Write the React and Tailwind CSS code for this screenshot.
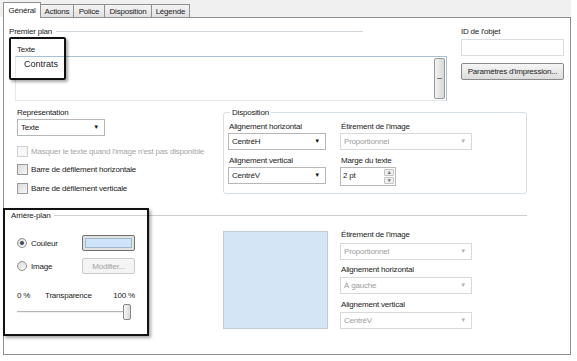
import React from 'react'

const font = { fontFamily: '"Liberation Sans", Arial, sans-serif' }

function Select({ value, width, disabled }) {
  return (
    <div
      className={`flex h-[17px] items-center justify-between border bg-white pl-[3px] pr-[5px] ${
        disabled ? 'border-[#d9d9d9] text-[#9d9d9d]' : 'border-[#b7b7b7] text-[#222]'
      }`}
      style={{ width }}
    >
      <span>{value}</span>
      <span className={`text-[6px] ${disabled ? 'text-[#b0b0b0]' : 'text-[#111]'}`}>▼</span>
    </div>
  )
}

function Checkbox({ label, disabled }) {
  return (
    <div className={`flex h-[11px] items-center gap-[3px] whitespace-nowrap ${disabled ? 'text-[#a5a5a5]' : 'text-[#222]'}`}>
      <div
        className={`h-[11px] w-[11px] shrink-0 border ${
          disabled
            ? 'border-[#d0d0d0] bg-[#f7f7f7]'
            : 'border-[#9a9a9a] bg-gradient-to-br from-[#dcdcdc] to-[#f6f6f6]'
        }`}
      />
      <span>{label}</span>
    </div>
  )
}

function Radio({ checked }) {
  return (
    <div className="flex h-[10px] w-[10px] items-center justify-center rounded-full border border-[#929292] bg-gradient-to-br from-[#d8d8d8] to-[#f8f8f8]">
      {checked && <div className="h-[4px] w-[4px] rounded-full bg-[#3b4a5a]" />}
    </div>
  )
}

function Tab({ label, width, active }) {
  return active ? (
    <div
      className="relative z-10 -mb-px flex h-[16px] items-start justify-center border border-b-0 border-[#8e8f8f] bg-white pt-[2px] text-[#222]"
      style={{ width }}
    >
      {label}
    </div>
  ) : (
    <div
      className="-ml-px flex h-[13px] items-center justify-center border border-b-0 border-[#8e8f8f] bg-gradient-to-b from-[#f4f4f4] to-[#e1e1e1] text-[#222]"
      style={{ width }}
    >
      {label}
    </div>
  )
}

export default function App() {
  return (
    <div
      className="relative h-[361px] w-[577px] overflow-hidden whitespace-nowrap bg-white text-[8px] leading-[11px] tracking-[-0.2px]"
      style={font}
    >
      {/* tabs */}
      <div className="flex h-[17px] w-[571px] items-end bg-[#f0f0f0] pl-[3px]">
        <Tab label="Général" width={38} active />
        <Tab label="Actions" width={34} />
        <Tab label="Police" width={32} />
        <Tab label="Disposition" width={48} />
        <Tab label="Légende" width={39} />
      </div>

      {/* panel */}
      <div className="ml-[3px] h-[338px] w-[568px] border border-[#8e8f8f] bg-white text-[#222]">
        {/* premier plan */}
        <div className="flex h-[83px]">
          <div className="ml-[5px] w-[438px]">
            <div className="mt-[8px] flex h-[11px] items-center">
              <span>Premier plan</span>
              <div className="ml-[4px] mr-[84px] h-px flex-1 bg-[#d0d7dd]" />
            </div>
            <div className="ml-[8px] mt-[7px] h-[11px]">Texte</div>
            <div className="ml-[6px] mt-[1px] flex h-[45px] w-[432px] justify-between border border-[#a9bfd6] border-b-[#e3e9ef] border-l-[#e3e9ef] bg-white">
              <span className="ml-[8px] mt-[2px] text-[9px] tracking-normal">Contrats</span>
              <div className="mr-[1px] mt-[1px] flex h-[41px] w-[11px] items-center justify-center rounded-[2px] border border-[#9a9a9a] bg-gradient-to-r from-[#f2f2f2] to-[#d9d9d9]">
                <div className="h-px w-[5px] bg-[#777]" />
              </div>
            </div>
          </div>
          <div className="ml-[14px] w-[103px]">
            <div className="mt-[8px] h-[11px]">ID de l'objet</div>
            <div className="mt-[2px] h-[17px] border border-[#d9dde2] bg-white" />
            <div className="mt-[7px] flex h-[17px] items-center justify-center rounded-[2px] border border-[#8a8a8a] bg-gradient-to-b from-[#f6f6f6] to-[#dcdcdc]">
              Paramètres d'impression...
            </div>
          </div>
        </div>

        {/* représentation + disposition */}
        <div className="flex h-[104px]">
          <div className="ml-[13px] w-[206px]">
            <div className="mt-[6px] h-[11px]">Représentation</div>
            <div className="mt-[1px]">
              <Select value="Texte" width={88} />
            </div>
            <div className="mt-[10px]">
              <Checkbox label="Masquer le texte quand l'image n'est pas disponible" disabled />
            </div>
            <div className="mt-[7px]">
              <Checkbox label="Barre de défilement horizontale" />
            </div>
            <div className="mt-[8px]">
              <Checkbox label="Barre de défilement verticale" />
            </div>
          </div>
          <fieldset className="mt-[6px] h-[87px] w-[304px] rounded-[3px] border border-[#d5dfe5] px-[4px]">
            <legend className="ml-[2px] px-[2px] leading-[11px]">Disposition</legend>
            <div className="mt-[3px] grid grid-cols-[98px_132px] gap-x-[14px]">
              <div>
                <div className="ml-[1px] h-[11px]">Alignement horizontal</div>
                <div className="mt-[1px]">
                  <Select value="CentréH" width={98} />
                </div>
                <div className="ml-[1px] mt-[5px] h-[11px]">Alignement vertical</div>
                <div className="mt-[1px]">
                  <Select value="CentréV" width={98} />
                </div>
              </div>
              <div>
                <div className="ml-[1px] h-[11px]">Étirement de l'image</div>
                <div className="mt-[1px]">
                  <Select value="Proportionnel" width={132} disabled />
                </div>
                <div className="ml-[1px] mt-[5px] h-[11px]">Marge du texte</div>
                <div className="mt-[1px] flex h-[19px] w-[56px] justify-between border border-[#b7b7b7] bg-white pl-[2px]">
                  <span className="mt-[2px]">2 pt</span>
                  <div className="mr-[1px] mt-[1px] flex flex-col gap-px">
                    <div className="flex h-[7px] w-[10px] items-center justify-center rounded-[1px] border border-[#c4c4c4] bg-[#eeeeee] text-[5px] leading-none text-[#666]">▲</div>
                    <div className="flex h-[7px] w-[10px] items-center justify-center rounded-[1px] border border-[#c4c4c4] bg-[#eeeeee] text-[5px] leading-none text-[#666]">▼</div>
                  </div>
                </div>
              </div>
            </div>
          </fieldset>
        </div>

        {/* arrière-plan */}
        <div className="ml-[7px] mt-[5px] flex h-[11px] w-[516px] items-center">
          <span>Arrière-plan</span>
          <div className="ml-[4px] h-px flex-1 bg-[#cfcfcf]" />
        </div>

        <div className="flex">
          <div className="ml-[13px] w-[206px]">
            <div className="mt-[14px] flex h-[16px] items-center">
              <div className="flex w-[65px] items-center gap-[4px]">
                <Radio checked />
                <span>Couleur</span>
              </div>
              <div className="flex h-[16px] w-[53px] items-center justify-center rounded-[2px] border border-[#707070] bg-[#e2e2e2]">
                <div className="h-[10px] w-[47px] border border-[#9fb7cf] bg-[#cfe4f8]" />
              </div>
            </div>
            <div className="mt-[7px] flex h-[16px] items-center">
              <div className="flex w-[65px] items-center gap-[4px]">
                <Radio />
                <span>Image</span>
              </div>
              <div className="flex h-[16px] w-[53px] items-center justify-center rounded-[2px] border border-[#cbcbcb] bg-[#f4f4f4] text-[#a3a3a3]">
                Modifier...
              </div>
            </div>
            <div className="mt-[16px] flex h-[11px] w-[118px] items-center">
              <span className="w-[28px]">0 %</span>
              <span className="flex-1">Transparence</span>
              <span>100 %</span>
            </div>
            <div className="mt-[3px] flex h-[16px] w-[114px] items-center">
              <div className="h-[2px] flex-1 border-t border-b border-t-[#b5b5b5] border-b-[#f0f0f0]" />
              <div className="h-[16px] w-[8px] rounded-[2px] border border-[#8a8a8a] bg-gradient-to-r from-[#f6f6f6] to-[#dadada]" />
            </div>
          </div>
          <div className="mt-[10px] h-[98px] w-[105px] border border-[#c3ccd5] bg-[#d4e5f6]" />
          <div className="ml-[12px]">
            <div className="ml-[1px] mt-[8px] h-[11px]">Étirement de l'image</div>
            <div className="mt-[3px]">
              <Select value="Proportionnel" width={132} disabled />
            </div>
            <div className="ml-[1px] mt-[4px] h-[11px]">Alignement horizontal</div>
            <div className="mt-[2px]">
              <Select value="À gauche" width={132} disabled />
            </div>
            <div className="ml-[1px] mt-[5px] h-[11px]">Alignement vertical</div>
            <div className="mt-[2px]">
              <Select value="CentréV" width={132} disabled />
            </div>
          </div>
        </div>
      </div>

      {/* highlight frames */}
      <div className="absolute left-[9px] top-[37px] h-[43px] w-[57px] rounded-[2px] border-2 border-[#111] shadow-[2px_2px_3px_rgba(0,0,0,0.35)]" />
      <div className="absolute left-[3px] top-[208px] h-[128px] w-[146px] border-2 border-[#111] shadow-[2px_2px_3px_rgba(0,0,0,0.35)]" />
    </div>
  )
}
